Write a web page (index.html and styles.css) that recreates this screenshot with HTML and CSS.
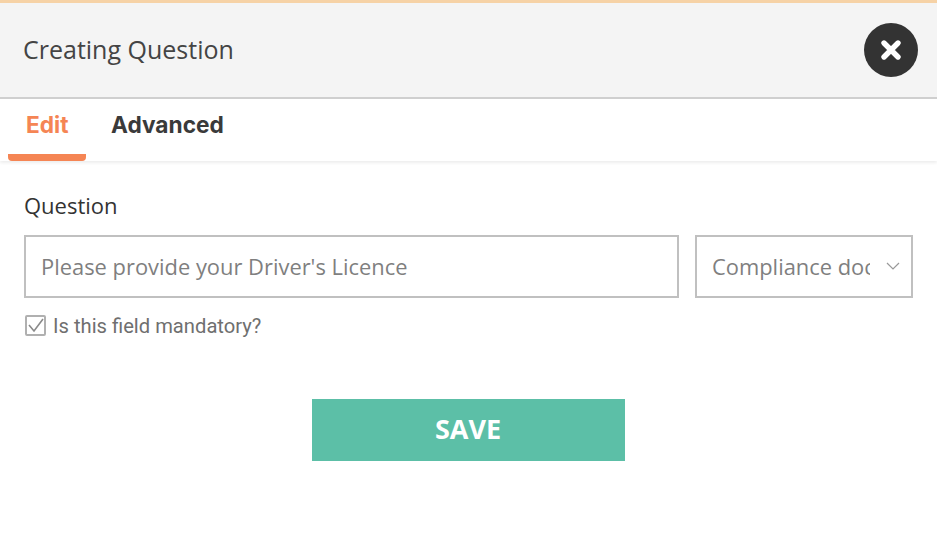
FILE: index.html
```html
<!DOCTYPE html>
<html>
<head>
    <title>Creating Question</title>
    <link rel="stylesheet" href="styles.css">
</head>
<body>
    <div class="modal">
        <div class="modal-header">
            <h2>Creating Question</h2>
            <button class="close-btn" type="button">
                <svg width="24" height="24" viewBox="0 0 24 24">
                    <path d="M5 5L19 19M19 5L5 19" stroke="#fff" stroke-width="5.4" stroke-linecap="round"/>
                </svg>
            </button>
        </div>
        <div class="tabs">
            <a class="tab active">Edit</a>
            <a class="tab">Advanced</a>
        </div>
        <div class="modal-body">
            <div class="form-label">Question</div>
            <div class="form-row">
                <div class="field field-question">Please provide your Driver's Licence</div>
                <div class="field field-select">
                    <span class="select-text">Compliance document</span>
                    <svg class="chevron" width="14" height="8" viewBox="0 0 14 8">
                        <path d="M1 1L7 7L13 1" fill="none" stroke="#999" stroke-width="1.2"/>
                    </svg>
                </div>
            </div>
            <label class="mandatory">
                <span class="checkbox">
                    <svg width="21" height="21" viewBox="0 0 21 21">
                        <path d="M4 10L9 16L18 4" fill="none" stroke="#8a8a8a" stroke-width="1.6"/>
                    </svg>
                </span>
                Is this field mandatory?
            </label>
            <div class="actions">
                <button class="save-btn" type="button">SAVE</button>
            </div>
        </div>
    </div>
</body>
</html>
```

FILE: styles.css
```css
html, body {
    height: 100%;
}

body {
    margin: 0;
    background-color: #fff;
    font-family: "Open Sans", sans-serif;
    overflow: hidden;
}

.modal {
    border-top: 3px solid #f6d2a6;
}

.modal-header {
    height: 94px;
    background-color: #f4f4f4;
    border-bottom: 2px solid #cfcfcf;
    display: flex;
    align-items: center;
    justify-content: space-between;
    padding: 0 19px 0 23px;
}

.modal-header h2 {
    margin: 0 0 2px;
    font-size: 25px;
    font-weight: 400;
    color: #444;
}

.close-btn {
    width: 54px;
    height: 54px;
    border: none;
    border-radius: 50%;
    background-color: #333;
    padding: 0;
    display: flex;
    align-items: center;
    justify-content: center;
}

.tabs {
    height: 62px;
    display: flex;
    gap: 25px;
    padding-left: 8px;
    box-shadow: 0 2px 3px rgba(0, 0, 0, 0.07);
}

.tab {
    height: 55px;
    padding-top: 12px;
    box-sizing: border-box;
    font-family: Inter, sans-serif;
    font-size: 22.7px;
    font-weight: 700;
    line-height: 28px;
    color: #3a3a3a;
}

.tab.active {
    width: 78px;
    padding-left: 18px;
    height: 62px;
    color: #f58554;
    border-bottom: 7px solid #f58554;
    border-radius: 0 0 4px 4px;
}

.modal-body {
    padding: 29px 24px 0;
}

.form-label {
    font-size: 22px;
    font-weight: 500;
    line-height: 30px;
    color: #333;
    margin-bottom: 15px;
}

.form-row {
    display: flex;
    gap: 16px;
}

.field {
    height: 63px;
    box-sizing: border-box;
    border: 2px solid #c0c0c0;
    display: flex;
    align-items: center;
    padding: 0 0 1px 15px;
    font-size: 21.9px;
    color: #7f7f7f;
}

.field-question {
    width: 655px;
}

.field-select {
    width: 218px;
}

.select-text {
    width: 158px;
    overflow: hidden;
    white-space: nowrap;
}

.chevron {
    margin-left: 16px;
}

.mandatory {
    display: flex;
    align-items: center;
    gap: 7px;
    margin: 17px 0 0 1px;
    font-family: Roboto, sans-serif;
    font-size: 20.2px;
    line-height: 20px;
    color: #6f6f6f;
}

.checkbox {
    width: 21px;
    height: 21px;
    box-sizing: border-box;
    border: 2px solid #b0b0b0;
    border-radius: 2px;
    display: block;
}

.checkbox svg {
    display: block;
    margin: -2px;
}

.actions {
    display: flex;
    justify-content: center;
    margin-top: 63px;
    padding-right: 1px;
}

.save-btn {
    width: 313px;
    height: 62px;
    border: none;
    padding: 0 0 4px;
    background-color: #5cbfa7;
    color: #fff;
    font-family: "Open Sans", sans-serif;
    font-size: 27px;
    font-weight: 700;
}
```
